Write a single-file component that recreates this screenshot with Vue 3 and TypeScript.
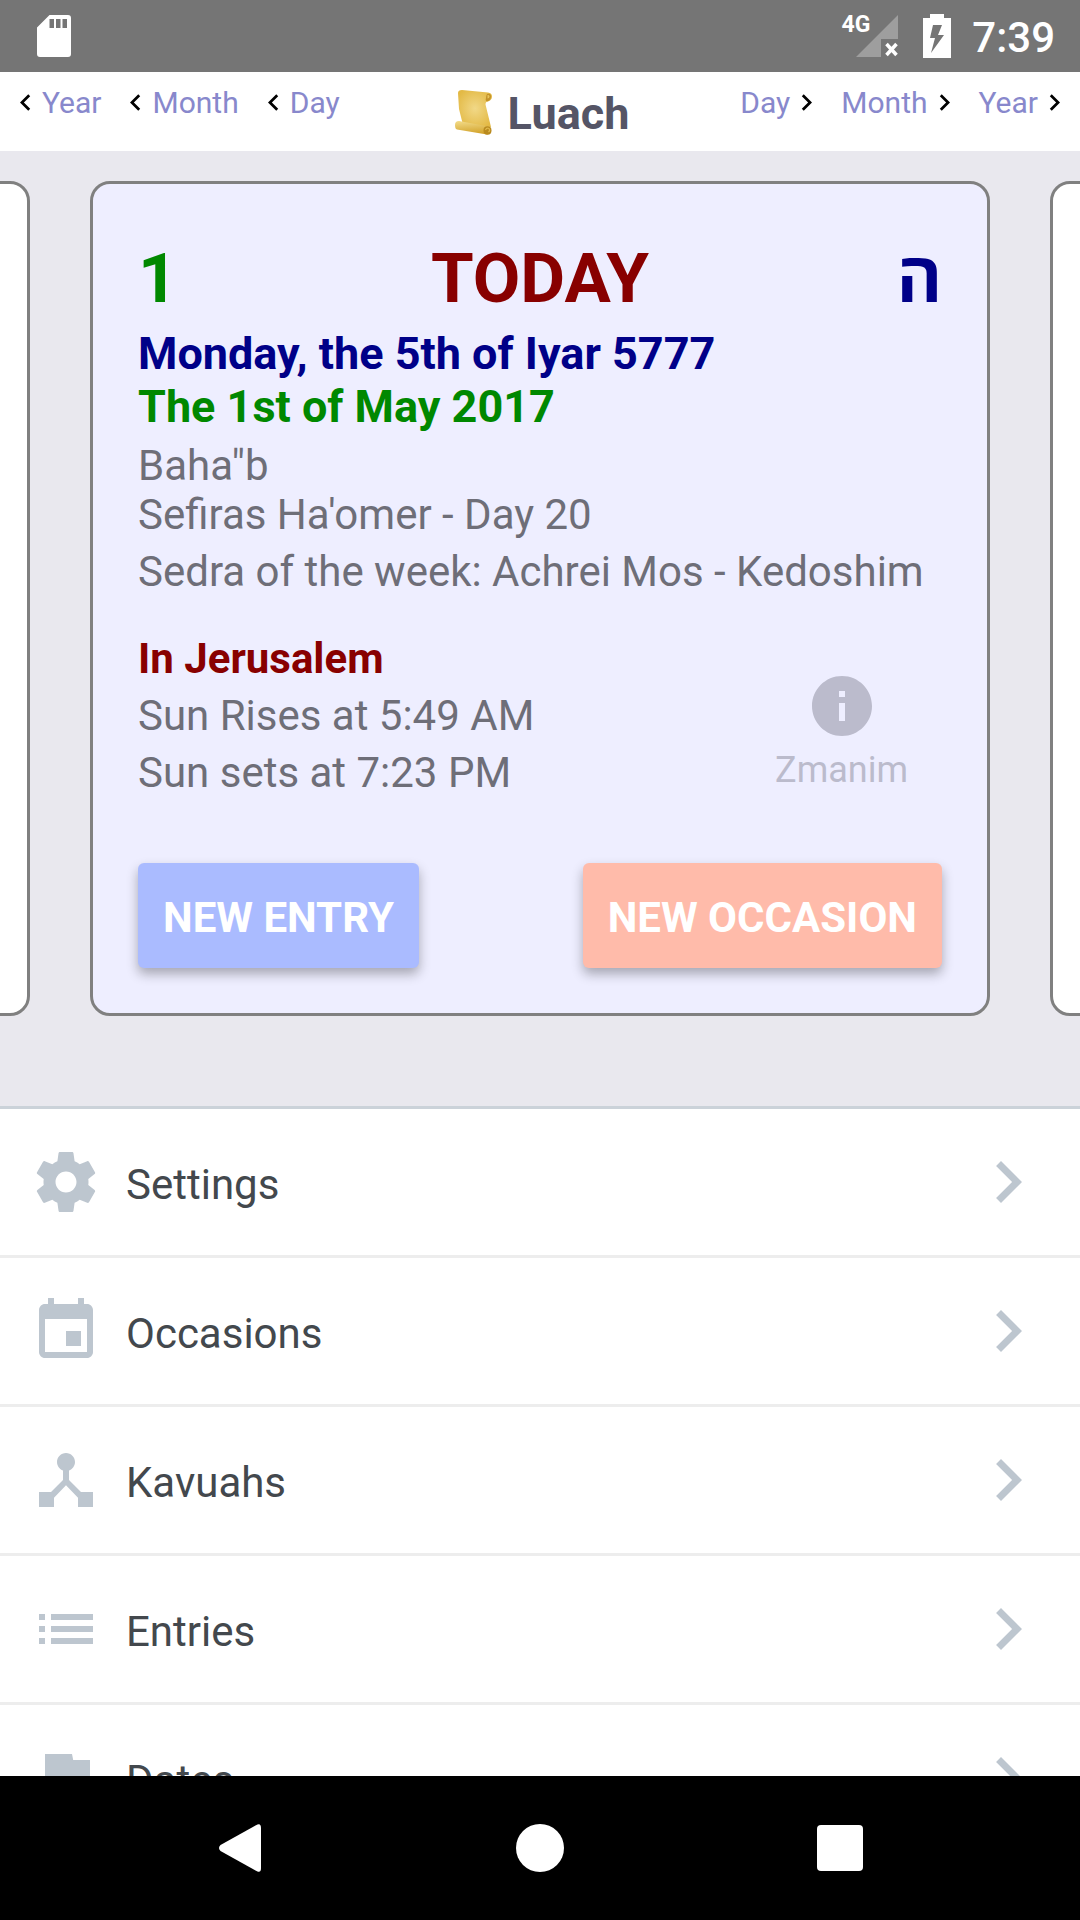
<script setup lang="ts">
interface MenuItem {
  label: string
  icon: string
}

const backLinks: string[] = ['Year', 'Month', 'Day']
const forwardLinks: string[] = ['Day', 'Month', 'Year']

const menuItems: MenuItem[] = [
  {
    label: 'Settings',
    icon: 'M19.43 12.98c.04-.32.07-.64.07-.98s-.03-.66-.07-.98l2.11-1.65c.19-.15.24-.42.12-.64l-2-3.46c-.12-.22-.39-.3-.61-.22l-2.49 1c-.52-.4-1.08-.73-1.69-.98l-.38-2.65C14.46 2.18 14.25 2 14 2h-4c-.25 0-.46.18-.49.42l-.38 2.65c-.61.25-1.17.59-1.69.98l-2.49-1c-.23-.09-.49 0-.61.22l-2 3.46c-.13.22-.07.49.12.64l2.11 1.65c-.04.32-.07.65-.07.98s.03.66.07.98l-2.11 1.65c-.19.15-.24.42-.12.64l2 3.46c.12.22.39.3.61.22l2.49-1c.52.4 1.08.73 1.69.98l.38 2.65c.03.24.24.42.49.42h4c.25 0 .46-.18.49-.42l.38-2.65c.61-.25 1.17-.59 1.69-.98l2.49 1c.23.09.49 0 .61-.22l2-3.46c.12-.22.07-.49-.12-.64l-2.11-1.65zM12 15.5c-1.93 0-3.5-1.57-3.5-3.5s1.57-3.5 3.5-3.5 3.5 1.57 3.5 3.5-1.57 3.5-3.5 3.5z',
  },
  {
    label: 'Occasions',
    icon: 'M17 12h-5v5h5v-5zM16 1v2H8V1H6v2H5c-1.11 0-1.99.9-1.99 2L3 19c0 1.1.89 2 2 2h14c1.1 0 2-.9 2-2V5c0-1.1-.9-2-2-2h-1V1h-2zm3 18H5V8h14v11z',
  },
  {
    label: 'Kavuahs',
    icon: 'M17 16l-4-4V8.82C14.16 8.4 15 7.3 15 6c0-1.66-1.34-3-3-3S9 4.34 9 6c0 1.3.84 2.4 2 2.82V12l-4 4H3v5h5v-3.05l4-4.2 4 4.2V21h5v-5h-4z',
  },
  {
    label: 'Entries',
    icon: 'M3 13h2v-2H3v2zm0 4h2v-2H3v2zm0-8h2V7H3v2zm4 4h14v-2H7v2zm0 4h14v-2H7v2zM7 7v2h14V7H7z',
  },
  {
    label: 'Dates',
    icon: 'M14.4 6L14 4H5v17h2v-7h5.6l.4 2h7V6z',
  },
]
</script>

<template>
  <div class="screen">
    <div class="status-bar">
      <svg class="sd-icon" viewBox="0 0 34 42" aria-hidden="true">
        <path fill="#fff" fill-rule="evenodd" d="M12.500 0H31a3 3 0 0 1 3 3v36a3 3 0 0 1-3 3H3a3 3 0 0 1-3-3V12.500zM12.500 4v9h4.500V4zM19 4v9h4.500V4zM25.500 4v9H30V4z" />
      </svg>
      <div class="status-right">
        <span class="network">4G</span>
        <svg class="signal-icon" viewBox="0 0 43 44" aria-hidden="true">
          <path fill="#9e9e9e" d="M42 1v24H25v18H0z" />
          <path stroke="#fff" stroke-width="3.500" d="M30.500 30l10 11M40.500 30l-10 11" />
        </svg>
        <svg class="battery-icon" viewBox="0 0 28 44" aria-hidden="true">
          <path fill="#fff" fill-rule="evenodd" d="M7 0h14v4h7v40H0V4h7zM10 11L7 24h5L8 39l13-18h-6l4-10z" />
        </svg>
        <span class="clock">7:39</span>
      </div>
    </div>

    <header class="header">
      <nav class="date-links" aria-label="Earlier dates">
        <a v-for="name in backLinks" :key="name" href="#">
          <svg viewBox="0 0 24 24" aria-hidden="true"><path d="M15.410 7.410L14 6l-6 6 6 6 1.410-1.410L10.830 12z" /></svg>
          <span>{{ name }}</span>
        </a>
      </nav>
      <h1 class="title">
        <svg class="scroll-icon" viewBox="0 0 37 46" aria-hidden="true">
          <defs>
            <radialGradient id="sheet" cx="0.5" cy="0.5" r="0.6">
              <stop offset="0" stop-color="#f1d887" />
              <stop offset="1" stop-color="#e3b944" />
            </radialGradient>
            <linearGradient id="roll" x1="0" y1="0" x2="0.2" y2="1">
              <stop offset="0" stop-color="#f3dc8a" />
              <stop offset="1" stop-color="#d3a42d" />
            </linearGradient>
          </defs>
          <path fill="url(#sheet)" d="M3 4q0-3 4-3l26 2.500q4 .5 4 4 0 3.500-4 5-2.500 0-2.500 3L36 38 8 36 4 20z" />
          <path fill="#c3922a" d="M32 5q4-1 4 2.500 0 4-4 5-2-1-1-3.500 0-2 1-4z" />
          <path fill="#e8c45a" d="M32.500 6q2-.5 2 1.500t-2 2z" />
          <path fill="url(#roll)" d="M0 36q0-4 4-4l27 5q5 0 5 4t-4 4.500L2 40.500Q0 40 0 36z" />
          <ellipse cx="32.500" cy="41.500" rx="4" ry="4.200" fill="#b98a1e" />
          <path fill="none" stroke="#e0b94c" stroke-width="1.200" d="M30.500 41q1-2.500 3.500-1.500 1.500 2-.5 3.500" />
        </svg>
        <span>Luach</span>
      </h1>
      <nav class="date-links" aria-label="Later dates">
        <a v-for="name in forwardLinks" :key="name" href="#">
          <span>{{ name }}</span>
          <svg viewBox="0 0 24 24" aria-hidden="true"><path d="M10 6L8.590 7.410 13.170 12l-4.580 4.590L10 18l6-6z" /></svg>
        </a>
      </nav>
    </header>

    <section class="carousel">
      <div class="card neighbour"></div>
      <article class="card today">
        <div class="card-top">
          <span class="green">1</span>
          <h2 class="maroon">TODAY</h2>
          <span class="navy hebrew" lang="he">ה</span>
        </div>
        <div class="dates">
          <p class="navy">Monday, the 5th of Iyar 5777</p>
          <p class="green">The 1st of May 2017</p>
        </div>
        <div>
          <p>Baha"b</p>
          <p>Sefiras Ha'omer - Day 20</p>
        </div>
        <p>Sedra of the week: Achrei Mos - Kedoshim</p>
        <div class="place">
          <div class="sun">
            <h3 class="maroon">In Jerusalem</h3>
            <p>Sun Rises at 5:49 AM</p>
            <p>Sun sets at 7:23 PM</p>
          </div>
          <button type="button" class="zmanim">
            <svg viewBox="0 0 24 24" aria-hidden="true"><path d="M12 2C6.480 2 2 6.480 2 12s4.480 10 10 10 10-4.480 10-10S17.520 2 12 2zm1 15h-2v-6h2v6zm0-8h-2V7h2v2z" /></svg>
            <span>Zmanim</span>
          </button>
        </div>
        <div class="actions">
          <button type="button" class="action entry">NEW ENTRY</button>
          <button type="button" class="action occasion">NEW OCCASION</button>
        </div>
      </article>
      <div class="card neighbour"></div>
    </section>

    <nav class="menu" aria-label="Main menu">
      <a v-for="item in menuItems" :key="item.label" href="#" class="menu-row">
        <svg class="menu-icon" viewBox="0 0 24 24" aria-hidden="true"><path :d="item.icon" /></svg>
        <span class="menu-label">{{ item.label }}</span>
        <svg class="menu-chevron" viewBox="0 0 24 24" aria-hidden="true"><path d="M10 6L8.590 7.410 13.170 12l-4.580 4.590L10 18l6-6z" /></svg>
      </a>
    </nav>

    <div class="system-nav">
      <button type="button" aria-label="Back">
        <svg viewBox="0 0 48 48" aria-hidden="true"><path d="M41.500.4Q45 -.8 45 4v40q0 4.800-3.500 3.600L4.500 27Q1.500 24 4.500 21z" /></svg>
      </button>
      <button type="button" aria-label="Home">
        <svg viewBox="0 0 48 48" aria-hidden="true"><circle cx="24" cy="24" r="24" /></svg>
      </button>
      <button type="button" aria-label="Recent apps">
        <svg viewBox="0 0 48 48" aria-hidden="true"><rect x="1" y="1" width="46" height="46" rx="4" /></svg>
      </button>
    </div>
  </div>
</template>

<style>
body {
  margin: 0;
}
</style>

<style scoped>
.screen {
  display: flex;
  flex-direction: column;
  height: 100vh;
  overflow: hidden;
  background: #e9e8ee;
  font-family: Roboto, "Open Sans", sans-serif;
}

.screen *,
.screen {
  box-sizing: border-box;
}

h1,
h2,
h3,
p {
  margin: 0;
  font-size: inherit;
}

a {
  color: inherit;
  text-decoration: none;
}

button {
  padding: 0;
  border: 0;
  background: none;
  color: inherit;
  font: inherit;
}

svg {
  display: block;
  flex: none;
}

.status-bar {
  display: flex;
  flex: none;
  align-items: center;
  justify-content: space-between;
  height: 72px;
  padding: 0 25px 0 37px;
  background: #757575;
  color: #fff;
}

.sd-icon {
  width: 34px;
  height: 42px;
}

.status-right {
  display: flex;
  align-items: center;
}

.network {
  align-self: flex-start;
  margin-right: -14px;
  font-size: 23px;
  font-weight: 700;
  line-height: 28px;
}

.signal-icon {
  width: 43px;
  height: 44px;
  margin-right: 24px;
}

.battery-icon {
  width: 28px;
  height: 44px;
  margin-right: 21px;
}

.clock {
  padding-top: 3px;
  font-size: 42px;
  font-weight: 500;
  line-height: 48px;
}

.header {
  display: grid;
  flex: none;
  grid-template-columns: 1fr auto 1fr;
  height: 79px;
  padding: 0 9px;
  background: #fff;
}

.date-links {
  display: flex;
  gap: 18px;
  align-items: center;
  height: 60px;
  color: #8888cc;
  font-size: 30px;
  line-height: 36px;
}

.date-links:last-child {
  justify-content: flex-end;
}

.date-links a {
  display: flex;
  align-items: center;
}

.date-links span {
  padding-top: 2px;
}

.date-links svg {
  width: 33px;
  height: 33px;
  fill: #000;
}

.title {
  display: flex;
  gap: 16px;
  align-items: center;
  padding-left: 4px;
  color: #555566;
  font-size: 45px;
  font-weight: 700;
  line-height: 53px;
}

.title span {
  padding-top: 4px;
}

.scroll-icon {
  width: 37px;
  height: 46px;
}

.carousel {
  display: flex;
  flex: none;
  gap: 60px;
  justify-content: center;
  padding: 30px 0 90px;
  overflow: hidden;
}

.card {
  flex: none;
  width: calc(100% - 180px);
  border: 3px solid #808080;
  border-radius: 20px;
  background: #fff;
}

.today {
  display: flex;
  flex-direction: column;
  gap: 8px;
  padding: 54px 45px 45px;
  background: #eeeeff;
  color: #6e6e78;
  font-size: 42px;
  line-height: 49px;
}

.card-top {
  display: grid;
  grid-template-columns: 1fr auto 1fr;
  font-size: 69px;
  font-weight: 700;
  line-height: 81px;
}

.hebrew {
  text-align: right;
}

.dates {
  font-size: 45px;
  font-weight: 700;
  line-height: 53px;
}

.green {
  color: #008800;
}

.maroon {
  color: #880000;
}

.navy {
  color: #000088;
}

.place {
  display: flex;
  align-items: flex-end;
  justify-content: space-between;
  padding-top: 30px;
}

.sun {
  display: flex;
  flex-direction: column;
  gap: 8px;
}

.zmanim {
  display: flex;
  flex-direction: column;
  gap: 7px;
  align-items: center;
  margin: 0 34px 6px 0;
  color: #bbbbcc;
  font-size: 36px;
  line-height: 42px;
}

.zmanim svg {
  width: 72px;
  height: 72px;
  fill: currentColor;
}

.actions {
  display: flex;
  justify-content: space-between;
  padding-top: 58px;
}

.action {
  height: 105px;
  padding: 3px 25px 0;
  border-radius: 6px;
  box-shadow: 0 6px 12px rgba(0, 0, 0, 0.3);
  color: #fff;
  font-weight: 700;
}

.entry {
  background: #aabbff;
}

.occasion {
  background: #ffbbaa;
}

.menu {
  flex: 1;
  min-height: 0;
  overflow-y: auto;
  border-top: 3px solid #cbd2d9;
  background: #fff;
  scrollbar-width: none;
}

.menu-row {
  display: flex;
  align-items: center;
  height: 149px;
  padding: 0 30px;
  border-bottom: 3px solid #ededed;
  color: #43484d;
  font-size: 42px;
  line-height: 49px;
}

.menu-icon {
  width: 72px;
  height: 72px;
  fill: #bdc6cf;
}

.menu-label {
  flex: 1;
  padding: 4px 24px 0;
}

.menu-chevron {
  width: 84px;
  height: 84px;
  fill: #bdc6cf;
}

.system-nav {
  display: flex;
  flex: none;
  height: 144px;
  padding: 0 90px;
  background: #000;
}

.system-nav button {
  display: flex;
  flex: 1;
  align-items: center;
  justify-content: center;
}

.system-nav svg {
  width: 48px;
  height: 48px;
  fill: #fff;
}
</style>
